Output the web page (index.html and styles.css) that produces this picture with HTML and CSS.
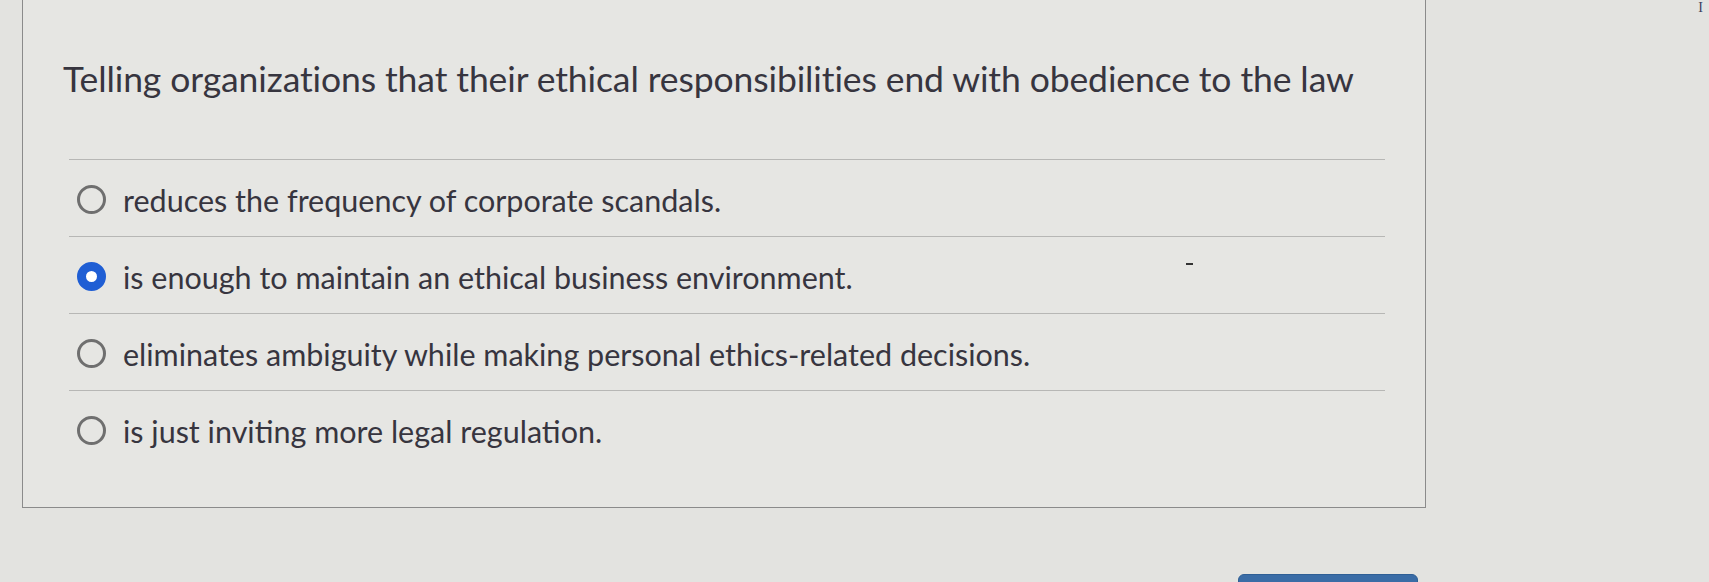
FILE: index.html
```html
<!DOCTYPE html>
<html lang="en">
<head>
<meta charset="utf-8">
<title>Question</title>
<link rel="stylesheet" href="styles.css">
</head>
<body>
<div class="page">
  <div class="main">
    <section class="card">
      <p class="question">Telling organizations that their ethical responsibilities end with obedience to the law</p>
      <ul class="options">
        <li class="option"><span class="radio"></span><span class="label">reduces the frequency of corporate scandals.</span></li>
        <li class="option"><span class="radio selected"></span><span class="label">is enough to maintain an ethical business environment.</span><span class="mark"></span></li>
        <li class="option"><span class="radio"></span><span class="label">eliminates ambiguity while making personal ethics-related decisions.</span></li>
        <li class="option"><span class="radio"></span><span class="label">is just inviting more legal regulation.</span></li>
      </ul>
    </section>
    <div class="actions"><button class="btn" type="button"></button></div>
  </div>
  <div class="aside"><span class="cursor">I</span></div>
</div>
</body>
</html>
```
FILE: styles.css
```css
html, body {
  margin: 0;
  padding: 0;
  background: #e3e3e0;
  height: 100%;
  overflow: hidden;
}
.page {
  display: flex;
  font-family: Lato, "Open Sans", sans-serif;
  color: #37353f;
}
.main {
  margin-left: 22px;
  width: 1404px;
}
.card {
  border: 1.5px solid #8b8b8b;
  border-top: none;
  background: #e6e6e3;
  padding: 0 40px 40px 40px;
}
.question {
  margin: 0;
  padding-top: 57px;
  font-size: 35.5px;
  line-height: 44px;
  letter-spacing: -0.1px;
}
.options {
  list-style: none;
  margin: 58px 0 0 6px;
  padding: 0;
}
.option {
  position: relative;
  display: flex;
  align-items: center;
  height: 77px;
  box-sizing: border-box;
  padding-top: 3px;
  border-top: 1.5px solid #b7b7b5;
  font-size: 30.5px;
}
.radio {
  box-sizing: border-box;
  width: 29px;
  height: 29px;
  border-radius: 50%;
  border: 3px solid #6f6f6f;
  margin-left: 8px;
  margin-right: 17px;
  flex: none;
}
.radio.selected {
  border: 9px solid #1f5ed4;
  background: #ffffff;
}
.mark {
  position: absolute;
  left: 1117px;
  top: 26px;
  width: 7px;
  height: 2px;
  background: #333;
}
.actions {
  display: flex;
  justify-content: flex-end;
  margin-top: 66px;
  padding-right: 8px;
}
.btn {
  width: 180px;
  height: 40px;
  border: 1px solid #2f5f95;
  border-radius: 6px;
  background: #3a6ca6;
}
.aside {
  flex: 1;
  display: flex;
  justify-content: flex-end;
  align-items: flex-start;
  padding-right: 6px;
}
.cursor {
  font-family: "Liberation Serif", serif;
  font-size: 14px;
  line-height: 14px;
  margin-top: 1px;
  color: #3b4060;
}
```
